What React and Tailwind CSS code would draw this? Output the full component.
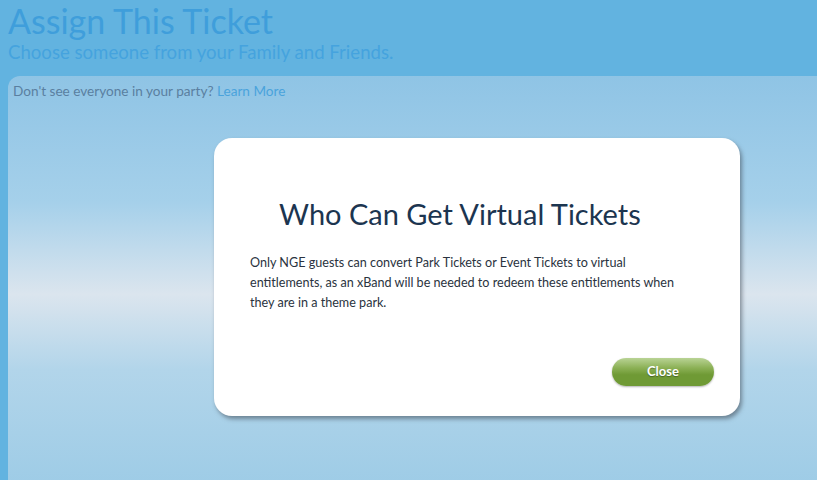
import React from 'react';

export default function App() {
    return (
        <div className="relative w-[817px] h-[480px] overflow-hidden bg-[#62b3e0] font-['Lato',sans-serif]">
            {/* Page header */}
            <div className="px-2">
                <h1 className="text-[34px] leading-[41px] text-[#3f9edb] font-normal">Assign This Ticket</h1>
                <p className="text-[18.6px] leading-[22px] text-[#45a3de]">Choose someone from your Family and Friends.</p>
            </div>

            {/* Party panel */}
            <div className="ml-2 mt-[13px] h-[420px] rounded-tl-[12px] bg-[linear-gradient(to_bottom,#8fc4e5_0%,#a5d0ea_30%,#dbe5ee_52%,#b2d5ea_70%,#9ccbe6_100%)] px-[5px] pt-[7px]">
                <p className="text-[13.6px] leading-[16px] text-[#5a7fa0]">
                    Don't see everyone in your party? <a className="text-[#4aa3dc]">Learn More</a>
                </p>
            </div>

            {/* Info modal */}
            <div className="absolute left-[214px] top-[138px] w-[526px] h-[278px] rounded-[18px] bg-white shadow-[2px_3px_4px_rgba(60,70,80,0.55)] flex flex-col">
                <h2 className="ml-[65px] mt-[58px] text-[29px] leading-[35px] text-[#1c3550] font-normal">Who Can Get Virtual Tickets</h2>
                <p className="ml-[36px] w-[445px] mt-[22px] text-[12.6px] leading-[20px] text-[#2a3340]">
                    Only NGE guests can convert Park Tickets or Event Tickets to virtual entitlements, as an xBand will be needed to redeem these entitlements when they are in a theme park.
                </p>
                <div className="flex justify-end mt-auto mb-[30px] mr-[26px]">
                    <button className="w-[102px] h-[28px] rounded-full text-white text-[13px] font-bold bg-[linear-gradient(to_bottom,#b9d395_0%,#8cb156_35%,#6f9a35_60%,#6f9a35_100%)] shadow-[0_1px_2px_rgba(0,0,0,0.3)] [text-shadow:0_1px_1px_rgba(0,0,0,0.35)]">
                        Close
                    </button>
                </div>
            </div>
        </div>
    );
}
